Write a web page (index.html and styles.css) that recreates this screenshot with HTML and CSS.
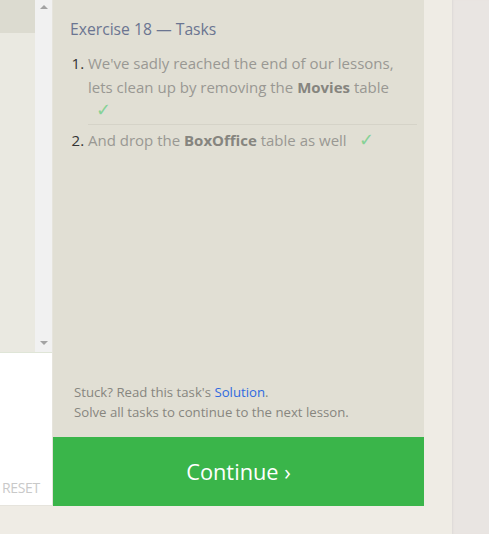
FILE: index.html
```html
<!DOCTYPE html>
<html>
<head>
<meta charset="utf-8">
<link rel="stylesheet" href="styles.css">
</head>
<body>
<div class="stage">
  <div class="left">
    <div class="editor">
      <div class="code"><div class="hl"></div></div>
      <div class="scroll">
        <span class="arrow up"></span>
        <span class="arrow down"></span>
      </div>
    </div>
    <div class="results"><span class="reset">RESET</span></div>
  </div>
  <div class="right">
    <div class="tasks">
      <h2 class="title">Exercise 18 — Tasks</h2>
      <ol class="list">
        <li class="item">We've sadly reached the end of our lessons, lets clean up by removing the <b>Movies</b> table <span class="check">✓</span></li>
        <li class="item">And drop the <b>BoxOffice</b> table as well <span class="check">✓</span></li>
      </ol>
      <div class="footer">
        <p class="line">Stuck? Read this task's <a class="link" href="#">Solution</a>.</p>
        <p class="line">Solve all tasks to continue to the next lesson.</p>
      </div>
    </div>
    <div class="continue">Continue ›</div>
  </div>
</div>
<div class="strip"></div>
</body>
</html>
```
FILE: styles.css
```css
html, body {
  margin: 0;
  padding: 0;
}
body {
  display: flex;
  height: 534px;
  overflow: hidden;
  background: #e9e5e2;
  font-family: "Open Sans", "Liberation Sans", sans-serif;
}
.stage {
  width: 452px;
  flex: none;
  height: 534px;
  box-sizing: border-box;
  padding-bottom: 28px;
  background: #efece5;
  display: flex;
}
.strip {
  flex: 1;
  background: #e9e5e2;
  box-shadow: inset 2px 0 2px -1px #dedad7;
}
.left {
  width: 52px;
  border-right: 1px solid #e6e4dc;
  display: flex;
  flex-direction: column;
}
.editor {
  height: 352px;
  display: flex;
  background: #eae9e1;
}
.code {
  width: 35px;
}
.hl {
  height: 33px;
  background: #dcdbd0;
}
.scroll {
  width: 17px;
  background: #f1f1f1;
  display: flex;
  flex-direction: column;
  justify-content: space-between;
  align-items: center;
  padding: 5px 0 7px;
  box-sizing: border-box;
}
.arrow {
  width: 0;
  height: 0;
  border-left: 4px solid transparent;
  border-right: 4px solid transparent;
}
.arrow.up {
  border-bottom: 4px solid #a3a3a3;
}
.arrow.down {
  border-top: 4px solid #a3a3a3;
}
.results {
  flex: 1;
  background: #ffffff;
  border-top: 1px solid #dfe5d7;
  border-bottom: 1px solid #e6e4dd;
  display: flex;
  align-items: flex-end;
  justify-content: flex-end;
  padding: 0 12px 7px 0;
  overflow: hidden;
}
.reset {
  font-size: 14px;
  line-height: 20px;
  color: #c9c9c9;
  letter-spacing: -0.3px;
}
.right {
  width: 371px;
  display: flex;
  flex-direction: column;
}
.tasks {
  flex: 1;
  background: #e1dfd4;
  padding: 17px 7px 15px 17px;
  display: flex;
  flex-direction: column;
}
.title {
  margin: 0 0 9px;
  font-size: 15.7px;
  line-height: 24px;
  font-weight: normal;
  color: #6b7591;
}
.list {
  margin: 0;
  padding: 0 0 0 18px;
  font-size: 15px;
  line-height: 23.5px;
  color: #999893;
}
.item {
  padding: 2px 10px 1px 0;
  border-bottom: 1px solid #d5d3c8;
}
.item + .item {
  padding-top: 4px;
}
.item:last-child {
  border-bottom: none;
}
.item::marker {
  color: #333333;
}
.item b {
  color: #86857f;
}
.check {
  display: inline-block;
  color: #86d296;
  font-size: 18px;
  line-height: 20px;
  margin-left: 8px;
}
.footer {
  margin-top: auto;
  padding-left: 4px;
}
.line {
  margin: 0;
  font-size: 13.2px;
  line-height: 20px;
  color: #87867f;
}
.link {
  color: #2f6ae0;
  text-decoration: none;
}
.continue {
  height: 69px;
  background: #3ab54a;
  color: #ffffff;
  font-size: 21.8px;
  display: flex;
  align-items: center;
  justify-content: center;
}
```
